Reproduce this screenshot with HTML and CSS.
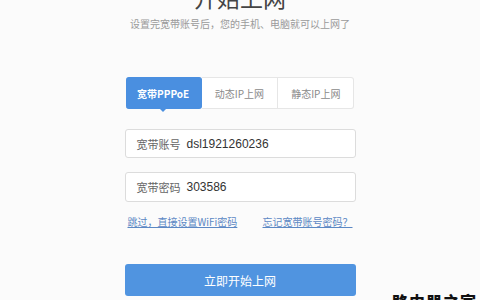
FILE: index.html
```html
<!DOCTYPE html>
<html lang="zh">
<head>
<meta charset="utf-8">
<link rel="stylesheet" href="styles.css">
</head>
<body>
<div class="page">
  <h1 class="title">开始上网</h1>
  <p class="subtitle">设置完宽带账号后，您的手机、电脑就可以上网了</p>
  <div class="tabs">
    <div class="tab active">宽带PPPoE</div>
    <div class="tab">动态IP上网</div>
    <div class="tab">静态IP上网</div>
  </div>
  <div class="field field-first"><span class="label">宽带账号</span><span class="value">dsl1921260236</span></div>
  <div class="field field-second"><span class="label">宽带密码</span><span class="value">303586</span></div>
  <div class="links">
    <a class="link">跳过，直接设置WiFi密码</a>
    <a class="link">忘记宽带账号密码？</a>
  </div>
  <div class="button">立即开始上网</div>
</div>
<div class="watermark">路由器之家</div>
</body>
</html>
```
FILE: styles.css
```css
html, body {
  margin: 0;
  padding: 0;
  width: 480px;
  height: 300px;
  overflow: hidden;
  background: #fbfbfb;
  font-family: "Noto Sans CJK SC", "Noto Sans", sans-serif;
}
.page {
  width: 231px;
  margin: 0 auto;
  display: flex;
  flex-direction: column;
}
.title {
  margin: -14px 0 0;
  height: 23px;
  font-size: 23px;
  line-height: 23px;
  font-weight: 400;
  color: #444;
  text-align: center;
}
.subtitle {
  margin: 8px -10px 0;
  height: 14px;
  font-size: 10px;
  line-height: 14px;
  color: #9a9a9a;
  text-align: center;
  white-space: nowrap;
}
.tabs {
  margin: 46px 1px 0 1px;
  display: flex;
  height: 32px;
  position: relative;
}
.tab {
  flex: 1;
  display: flex;
  align-items: center;
  justify-content: center;
  font-size: 10px;
  color: #8a8a8a;
  background: #fff;
  border: 1px solid #e6e6e6;
  border-left: none;
}
.tab:last-child {
  border-radius: 0 3px 3px 0;
}
.tab.active {
  background: #4a8fe0;
  border-color: #4a8fe0;
  color: #fff;
  font-weight: 700;
  border-radius: 3px;
  position: relative;
}
.tab.active::after {
  content: "";
  position: absolute;
  left: 50%;
  bottom: -4px;
  margin-left: -4px;
  border-left: 4px solid transparent;
  border-right: 4px solid transparent;
  border-top: 4px solid #4a8fe0;
}
.field {
  box-sizing: border-box;
  height: 29px;
  border: 1px solid #dcdcdc;
  border-radius: 3px;
  background: #fff;
  display: flex;
  align-items: center;
  padding-left: 11px;
  font-size: 11px;
}
.field-first {
  margin-top: 20px;
}
.field-second {
  margin-top: 14px;
  height: 30px;
}
.label {
  color: #666;
  margin-right: 6px;
}
.value {
  color: #333;
  font-family: "Liberation Sans", Arial, sans-serif;
  font-size: 12px;
}
.links {
  margin-top: 12px;
  height: 16px;
  display: flex;
  justify-content: space-between;
  padding: 0 3px;
  font-size: 10px;
  line-height: 16px;
}
.link {
  color: #5b88c4;
  text-decoration: underline;
}
.button {
  margin-top: 34px;
  height: 32px;
  border-radius: 3px;
  background: #5094e0;
  color: #fff;
  font-size: 12px;
  display: flex;
  align-items: center;
  justify-content: center;
}
.watermark {
  position: absolute;
  left: 392px;
  top: 291px;
  font-size: 16px;
  font-weight: 900;
  color: #111;
  line-height: 20px;
  letter-spacing: 1px;
}
```
